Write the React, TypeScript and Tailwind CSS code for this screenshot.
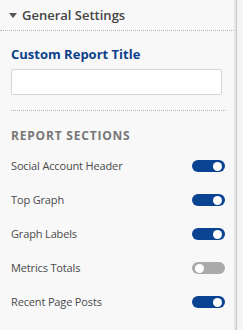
import { useState } from 'react';

const sections = [
  { label: 'Social Account Header', on: true },
  { label: 'Top Graph', on: true },
  { label: 'Graph Labels', on: true },
  { label: 'Metrics Totals', on: false },
  { label: 'Recent Page Posts', on: true },
];

const Toggle = ({ on, onClick }: { on: boolean; onClick: () => void }) => (
  <button
    onClick={onClick}
    className={`relative w-[33px] h-[12px] rounded-full ${on ? 'bg-[#0b4393]' : 'bg-[#aaaaaa]'}`}
  >
    <span
      className={`absolute top-[1.5px] w-[9px] h-[9px] rounded-full bg-white ${on ? 'right-[3px]' : 'left-[3px]'}`}
    />
  </button>
);

const App = () => {
  const [items, setItems] = useState(sections);

  const flip = (i: number) => {
    setItems(items.map((s, j) => (j === i ? { ...s, on: !s.on } : s)));
  };

  return (
    <div className="w-[243px] h-[330px] flex bg-[#f4f4f4] font-['Open_Sans',sans-serif] overflow-hidden">
      <div className="w-[234px] bg-[#f8f8f8] flex flex-col">
        <div className="h-[31px] flex items-center border-b border-dotted border-[#b5b5b5] pl-[9px]">
          <span className="w-0 h-0 border-l-[4px] border-r-[4px] border-t-[5px] border-l-transparent border-r-transparent border-t-[#555] mr-[5px]" />
          <span className="text-[13px] font-semibold text-[#444] leading-none">General Settings</span>
        </div>

        <div className="pl-[11px] pr-[8px]">
          <div className="mt-[14px] text-[13px] font-bold text-[#0d3f8a] leading-[18px]">Custom Report Title</div>
          <input
            type="text"
            className="mt-[6px] block w-[211px] h-[26px] bg-white border border-[#d6d6d6] rounded-[2px] outline-none"
          />
          <div className="mt-[15px] border-b border-dotted border-[#b5b5b5]" />

          <div className="mt-[17px] text-[12px] font-bold tracking-[0.8px] text-[#777] leading-[16px]">REPORT SECTIONS</div>

          <div className="mt-[5px] flex flex-col">
            {items.map((s, i) => (
              <div key={s.label} className="h-[34px] flex items-center justify-between pr-[1px]">
                <span className="text-[11px] tracking-[-0.15px] text-[#4a4a4a]">{s.label}</span>
                <Toggle on={s.on} onClick={() => flip(i)} />
              </div>
            ))}
          </div>
        </div>
      </div>
      <div className="w-[2px] bg-[#e6e6e6]" />
      <div className="w-[1px] bg-[#c8c8c8]" />
    </div>
  );
};

export default App;
